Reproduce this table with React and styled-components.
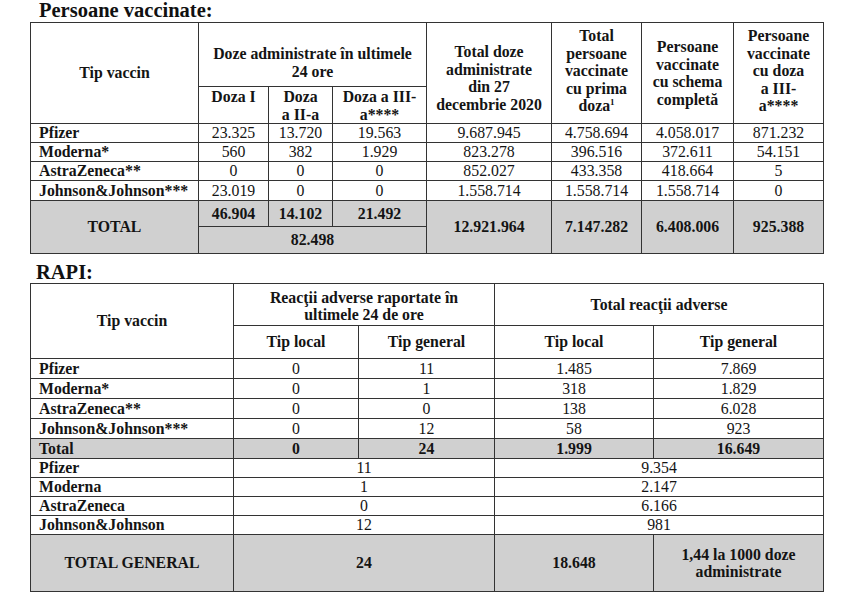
import React from 'react';
import styled, { createGlobalStyle } from 'styled-components';

const GlobalStyle = createGlobalStyle`
  body {
    margin: 0;
    background: #ffffff;
    font-family: "Liberation Serif", "Times New Roman", serif;
    color: #141414;
  }
`;

const Page = styled.div`
  width: 793px;
  padding-left: 30px;
`;

const Title = styled.h2`
  margin: ${p => p.$top || 0}px 0 ${p => p.$bottom || 0}px ${p => p.$indent || 0}px;
  font-family: "Liberation Serif", "Times New Roman", serif;
  font-size: 20.5px;
  line-height: 20px;
  height: 20px;
  font-weight: bold;
  color: #111;
`;

const Table = styled.table`
  width: 793px;
  table-layout: fixed;
  border-collapse: collapse;
  font-size: 15.8px;
  line-height: 17.5px;
`;

const Row = styled.tr`
  height: ${p => p.$h}px;
  background: ${p => (p.$gray ? '#d0d0d0' : 'transparent')};
`;

const Cell = styled.td`
  border: 1px solid #333333;
  padding: ${p => p.$pad || '0 2px'};
  text-align: ${p => p.$align || 'center'};
  vertical-align: ${p => p.$valign || 'middle'};
  font-weight: ${p => (p.$bold ? 'bold' : 'normal')};
  white-space: nowrap;
  overflow: hidden;
`;

const Name = styled(Cell).attrs({ $bold: true, $align: 'left', $pad: '0 0 0 8px' })``;

const Sup = styled.sup`
  font-size: 9px;
  line-height: 0;
  vertical-align: 6px;
`;

const vaccinRows = [
  ['Pfizer', '23.325', '13.720', '19.563', '9.687.945', '4.758.694', '4.058.017', '871.232'],
  ['Moderna*', '560', '382', '1.929', '823.278', '396.516', '372.611', '54.151'],
  ['AstraZeneca**', '0', '0', '0', '852.027', '433.358', '418.664', '5'],
  ['Johnson&Johnson***', '23.019', '0', '0', '1.558.714', '1.558.714', '1.558.714', '0'],
];

const rapiRows = [
  ['Pfizer', '0', '11', '1.485', '7.869'],
  ['Moderna*', '0', '1', '318', '1.829'],
  ['AstraZeneca**', '0', '0', '138', '6.028'],
  ['Johnson&Johnson***', '0', '12', '58', '923'],
];

const sumRows = [
  ['Pfizer', '11', '9.354'],
  ['Moderna', '1', '2.147'],
  ['AstraZeneca', '0', '6.166'],
  ['Johnson&Johnson', '12', '981'],
];

const VaccinTable = () => (
  <Table>
    <colgroup>
      <col style={{ width: 168 }} />
      <col style={{ width: 70 }} />
      <col style={{ width: 64 }} />
      <col style={{ width: 94 }} />
      <col style={{ width: 125 }} />
      <col style={{ width: 90 }} />
      <col style={{ width: 92 }} />
      <col style={{ width: 90 }} />
    </colgroup>
    <tbody>
      <Row $h={64}>
        <Cell rowSpan={2} $bold>Tip vaccin</Cell>
        <Cell colSpan={3} $bold $pad="16px 2px 0">Doze administrate în ultimele<br />24 ore</Cell>
        <Cell rowSpan={2} $bold $pad="10px 2px 0">Total doze<br />administrate<br />din 27<br />decembrie 2020</Cell>
        <Cell rowSpan={2} $bold $pad="0 2px 4px">Total<br />persoane<br />vaccinate<br />cu prima<br />doza<Sup>1</Sup></Cell>
        <Cell rowSpan={2} $bold>Persoane<br />vaccinate<br />cu schema<br />completă</Cell>
        <Cell rowSpan={2} $bold $pad="0 2px 4px">Persoane<br />vaccinate<br />cu doza<br />a III-<br />a****</Cell>
      </Row>
      <Row $h={37}>
        <Cell $bold $valign="top" $pad="1px 2px 0">Doza I</Cell>
        <Cell $bold $valign="top" $pad="1px 2px 0">Doza<br />a II-a</Cell>
        <Cell $bold $valign="top" $pad="1px 2px 0">Doza a III-<br />a****</Cell>
      </Row>
      {vaccinRows.map((r, i) => (
        <Row key={r[0]} $h={i === 3 ? 20 : 19}>
          <Name>{r[0]}</Name>
          {r.slice(1).map((v, j) => (
            <Cell key={j}>{v}</Cell>
          ))}
        </Row>
      ))}
      <Row $h={26} $gray>
        <Cell rowSpan={2} $bold>TOTAL</Cell>
        <Cell $bold>46.904</Cell>
        <Cell $bold>14.102</Cell>
        <Cell $bold>21.492</Cell>
        <Cell rowSpan={2} $bold>12.921.964</Cell>
        <Cell rowSpan={2} $bold>7.147.282</Cell>
        <Cell rowSpan={2} $bold>6.408.006</Cell>
        <Cell rowSpan={2} $bold>925.388</Cell>
      </Row>
      <Row $h={27} $gray>
        <Cell colSpan={3} $bold>82.498</Cell>
      </Row>
    </tbody>
  </Table>
);

const RapiTable = () => (
  <Table>
    <colgroup>
      <col style={{ width: 203 }} />
      <col style={{ width: 125 }} />
      <col style={{ width: 136 }} />
      <col style={{ width: 159 }} />
      <col style={{ width: 170 }} />
    </colgroup>
    <tbody>
      <Row $h={42}>
        <Cell rowSpan={2} $bold>Tip vaccin</Cell>
        <Cell colSpan={2} $bold $pad="3px 2px 0">Reacţii adverse raportate în<br />ultimele 24 de ore</Cell>
        <Cell colSpan={2} $bold>Total reacţii adverse</Cell>
      </Row>
      <Row $h={33}>
        <Cell $bold>Tip local</Cell>
        <Cell $bold>Tip general</Cell>
        <Cell $bold>Tip local</Cell>
        <Cell $bold>Tip general</Cell>
      </Row>
      {rapiRows.map(r => (
        <Row key={r[0]} $h={20}>
          <Name>{r[0]}</Name>
          {r.slice(1).map((v, j) => (
            <Cell key={j}>{v}</Cell>
          ))}
        </Row>
      ))}
      <Row $h={20} $gray>
        <Name>Total</Name>
        <Cell $bold>0</Cell>
        <Cell $bold>24</Cell>
        <Cell $bold>1.999</Cell>
        <Cell $bold>16.649</Cell>
      </Row>
      {sumRows.map(r => (
        <Row key={r[0]} $h={19}>
          <Name>{r[0]}</Name>
          <Cell colSpan={2}>{r[1]}</Cell>
          <Cell colSpan={2}>{r[2]}</Cell>
        </Row>
      ))}
      <Row $h={57} $gray>
        <Cell $bold>TOTAL GENERAL</Cell>
        <Cell colSpan={2} $bold>24</Cell>
        <Cell $bold>18.648</Cell>
        <Cell $bold>1,44 la 1000 doze<br />administrate</Cell>
      </Row>
    </tbody>
  </Table>
);

export default function App() {
  return (
    <Page>
      <GlobalStyle />
      <Title $indent={9} $top={0} $bottom={2}>Persoane vaccinate:</Title>
      <VaccinTable />
      <Title $indent={6} $top={8} $bottom={1}>RAPI:</Title>
      <RapiTable />
    </Page>
  );
}
